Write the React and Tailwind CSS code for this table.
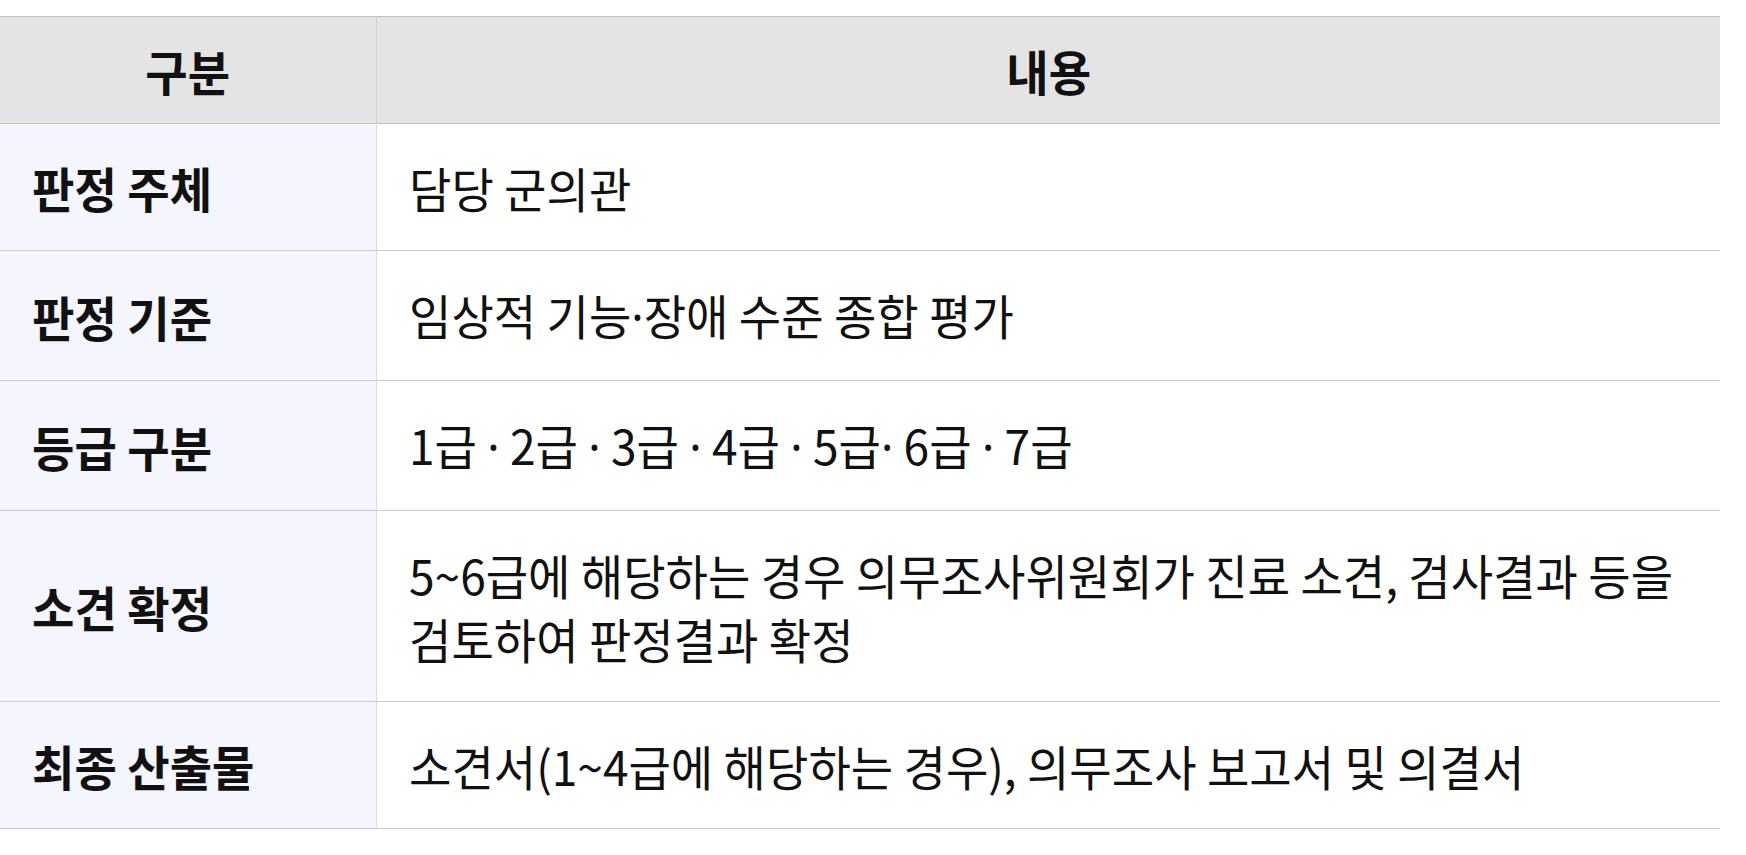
const rows = [
  { label: '판정 주체', content: '담당 군의관' },
  { label: '판정 기준', content: '임상적 기능·장애 수준 종합 평가' },
  { label: '등급 구분', content: '1급 · 2급 · 3급 · 4급 · 5급· 6급 · 7급' },
  { label: '소견 확정', content: '5~6급에 해당하는 경우 의무조사위원회가 진료 소견, 검사결과 등을 검토하여 판정결과 확정' },
  { label: '최종 산출물', content: '소견서(1~4급에 해당하는 경우), 의무조사 보고서 및 의결서' },
]

// middle dot from a Latin font so it stays narrow
function withDots(text) {
  const parts = text.split('·')
  return parts.map((p, i) => (
    <span key={i}>
      {p}
      {i < parts.length - 1 && <span style={{ fontFamily: '"Noto Sans", sans-serif' }}>·</span>}
    </span>
  ))
}

export default function App() {
  return (
    <div
      className="min-h-screen bg-white pt-4 text-[#111]"
      style={{ fontFamily: '"Noto Sans CJK KR", "Noto Sans", sans-serif' }}
    >
      <table className="w-[1720px] table-fixed border-collapse text-[48px] leading-[64px]">
        <colgroup>
          <col className="w-[376px]" />
          <col />
        </colgroup>
        <thead>
          <tr className="bg-[#e4e4e4] border-t border-b border-[#c2c2c2]">
            <th className="h-[107px] p-0 text-center font-bold border-r border-[#d2d2d2]">
              <div className="scale-x-[0.96]">구분</div>
            </th>
            <th className="h-[107px] p-0 text-center font-bold">
              <div className="scale-x-[0.96]">내용</div>
            </th>
          </tr>
        </thead>
        <tbody>
          {rows.map(r => (
            <tr key={r.label} className="border-b border-[#cacaca]">
              <td className="bg-[#f5f5fd] px-8 py-[31px] text-left font-bold border-r border-[#dadae2] whitespace-nowrap">
                <div className="h-[64px] origin-left scale-x-[0.96]">{r.label}</div>
              </td>
              <td className="px-8 py-[31px] text-left overflow-hidden">
                <div className="w-[1333px] origin-left scale-x-[0.96]">{withDots(r.content)}</div>
              </td>
            </tr>
          ))}
        </tbody>
      </table>
    </div>
  )
}
